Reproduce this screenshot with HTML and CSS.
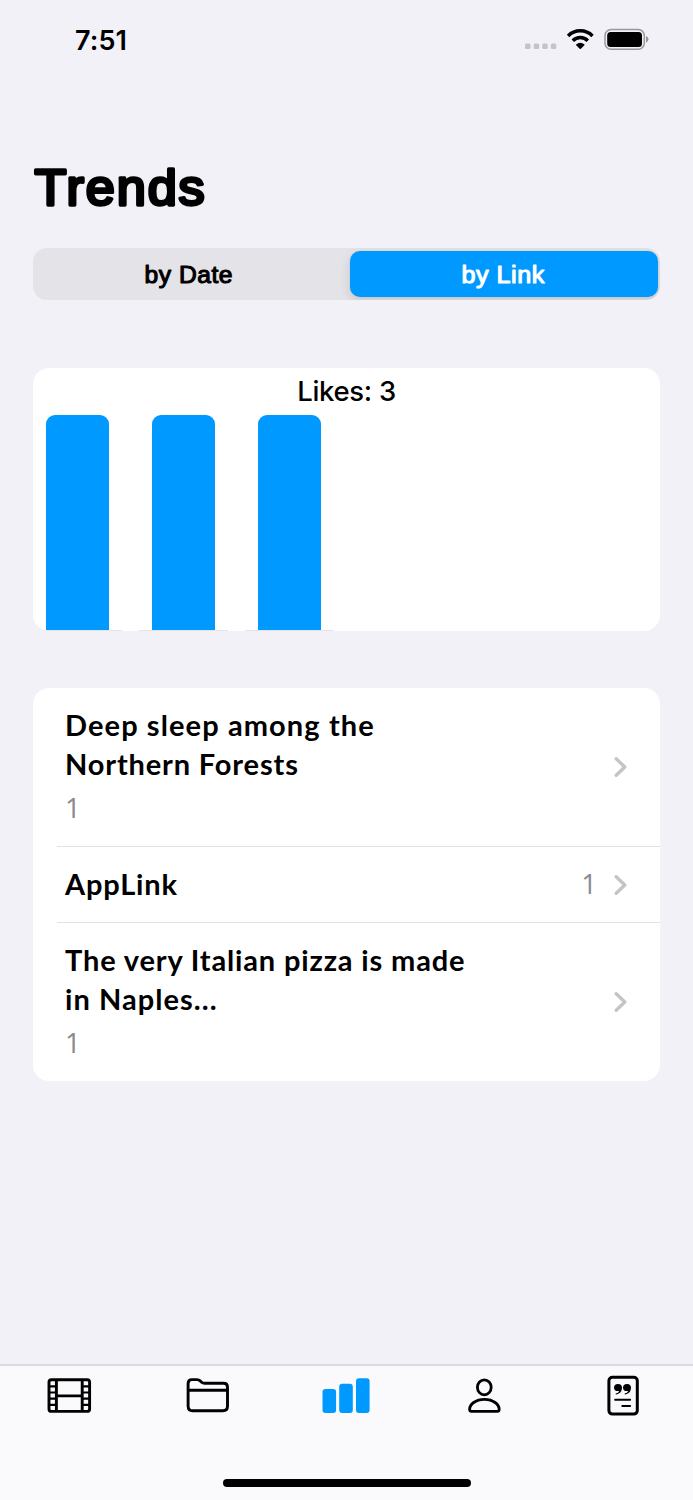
FILE: index.html
```html
<!DOCTYPE html>
<html lang="en">
<head>
<meta charset="utf-8">
<title>Trends</title>
<link rel="stylesheet" href="styles.css">
</head>
<body>
<div class="screen">
  <header class="status">
    <span class="time">7:51</span>
    <svg class="status-icons" width="126" height="28" viewBox="0 0 126 28">
      <g fill="#c4c3c8"><rect x="1" y="18.5" width="5.5" height="5.5" rx="1.5"/><rect x="9.7" y="18.5" width="5.5" height="5.5" rx="1.5"/><rect x="18.2" y="18.5" width="5.5" height="5.5" rx="1.5"/><rect x="26.8" y="18.5" width="5.5" height="5.5" rx="1.5"/></g>
      <g fill="none" stroke="#000" stroke-width="3.5"><path d="M44.1 10.9A17.3 17.3 0 0 1 68.5 10.9"/><path d="M48.8 15.7A10.6 10.6 0 0 1 63.8 15.7"/></g>
      <path d="M52.1 19.5Q56.3 16.1 60.5 19.5Q60.8 19.9 60.4 20.3L56.9 23.8Q56.3 24.4 55.7 23.8L52.2 20.3Q51.8 19.9 52.1 19.5Z"/>
      <rect x="81" y="4.5" width="39.3" height="19.7" rx="6" fill="none" stroke="#98979b" stroke-width="1.5"/>
      <rect x="83.2" y="6.9" width="34.8" height="15" rx="3.5"/>
      <path d="M122 10.9Q124.5 11.7 124.5 14.3T122 17.7Z" fill="#98979b"/>
    </svg>
  </header>
  <main class="content">
    <h1 class="title"><svg class="rounded heading" width="200" height="60"><text x="1.6" y="48" textLength="172" lengthAdjust="spacingAndGlyphs">Trends</text></svg></h1>
    <div class="segments">
      <div class="segment"><svg class="rounded label" width="90" height="32"><text x="0.5" y="25" textLength="88.5" lengthAdjust="spacingAndGlyphs">by Date</text></svg></div>
      <div class="segment selected"><svg class="rounded label" width="86" height="32"><text x="1.4" y="25" textLength="83.5" lengthAdjust="spacingAndGlyphs">by Link</text></svg></div>
    </div>
    <section class="chart">
      <div class="chart-title">Likes: 3</div>
      <div class="bars">
        <div class="slot"><div class="bar"></div></div>
        <div class="slot"><div class="bar"></div></div>
        <div class="slot"><div class="bar"></div></div>
      </div>
    </section>
    <section class="list">
      <div class="row tall first">
        <div class="text"><div class="name"><span class="l1">Deep sleep among the</span><br><span class="l2">Northern Forests</span></div><div class="count">1</div></div>
        <svg class="chevron" width="14" height="22" viewBox="0 0 14 22"><path d="M2.2 2.7L10.8 11L2.2 19.3"/></svg>
      </div>
      <div class="row short">
        <div class="text"><div class="name l3">AppLink</div></div>
        <div class="count side">1</div>
        <svg class="chevron" width="14" height="22" viewBox="0 0 14 22"><path d="M2.2 2.7L10.8 11L2.2 19.3"/></svg>
      </div>
      <div class="row tall">
        <div class="text"><div class="name"><span class="l4">The very Italian pizza is made</span><br><span class="l5">in Naples...</span></div><div class="count">1</div></div>
        <svg class="chevron" width="14" height="22" viewBox="0 0 14 22"><path d="M2.2 2.7L10.8 11L2.2 19.3"/></svg>
      </div>
    </section>
  </main>
  <footer class="tabbar">
    <nav class="tabs">
      <div class="tab"><svg width="50" height="50" viewBox="0 0 50 50"><g fill="none" stroke="#000" stroke-width="2.9"><rect x="5" y="9.8" width="40.6" height="31.6" rx="2.5"/><path d="M12.4 9.8V41.4M38.2 9.8V41.4M12.4 25.9H38.2" /><path stroke-width="2.2" d="M5 16.3H12M5 22.5H12M5 28.7H12M5 34.8H12M38 16.3H45M38 22.5H45M38 28.7H45M38 34.8H45"/></g></svg></div>
      <div class="tab"><svg width="50" height="50" viewBox="0 0 50 50"><path fill="none" stroke="#000" stroke-width="2.9" d="M5.1 36V13.5Q5.1 9.6 9 9.6H13.9Q15.8 9.6 17.2 10.9L18.6 12.2Q19.8 13.3 21.6 13.3H40.5Q44.5 13.3 44.5 17.3V36.3Q44.5 40.8 40 40.8H9.6Q5.1 40.8 5.1 36ZM5.1 20.2H44.5"/></svg></div>
      <div class="tab"><svg width="50" height="50" viewBox="0 0 50 50"><g fill="#0099ff"><rect x="1.5" y="19" width="13.6" height="24" rx="3"/><rect x="18.2" y="13.8" width="13.6" height="29.2" rx="3"/><rect x="35" y="8.2" width="13.6" height="34.8" rx="3"/></g></svg></div>
      <div class="tab"><svg width="50" height="50" viewBox="0 0 50 50"><g fill="none" stroke="#000" stroke-width="2.8"><ellipse cx="24.3" cy="17.3" rx="6.9" ry="7.5"/><path d="M9.6 39.3C9.6 34.5 15.5 29.3 24.4 29.3S39.2 34.5 39.2 39.3Q39.2 41.4 37.2 41.4H11.6Q9.6 41.4 9.6 39.3Z"/></g></svg></div>
      <div class="tab"><svg width="50" height="50" viewBox="0 0 50 50"><rect x="9.9" y="7.3" width="28.4" height="36.8" rx="3.5" fill="none" stroke="#000" stroke-width="3"/><path d="M15 17.7A4 3.7 0 1 1 23 17.8Q23 23.2 17.4 24.5Q16.2 24.6 16.7 23.6Q19.5 22.9 20.2 20.9Q15.4 22 15 17.7ZM24 17.7A4 3.7 0 1 1 32 17.8Q32 23.2 26.4 24.5Q25.2 24.6 25.7 23.6Q28.5 22.9 29.2 20.9Q24.4 22 24 17.7Z"/><path d="M16.1 29.7H31.1M23.3 36H31.1" stroke="#000" stroke-width="2" stroke-linecap="round"/></svg></div>
    </nav>
    <div class="home"></div>
  </footer>
</div>
</body>
</html>
```

FILE: styles.css
```css
* { box-sizing: border-box; }
body { margin: 0; background: #f2f1f7; color: #000; font-family: Inter, sans-serif; }
.screen { width: 693px; height: 1500px; display: flex; flex-direction: column; overflow: hidden; }
.status { height: 100px; padding: 25px 43px 0 75px; display: flex; justify-content: space-between; align-items: flex-start; }
.time { font-size: 27px; line-height: 31px; font-weight: 600; letter-spacing: 0.1px; }
.content { flex: 1; padding: 0 33px; }
.title { margin: 57px 0 0; height: 91px; }
.rounded { display: block; overflow: visible; font-family: "Liberation Sans", sans-serif; font-weight: 400; fill: currentColor; stroke: currentColor; stroke-linejoin: round; stroke-linecap: round; }
.heading { font-size: 50px; stroke-width: 3.3px; letter-spacing: 1.8px; }
.label { font-size: 23.5px; stroke-width: 1.1px; letter-spacing: 0.5px; }
.segments { height: 51.5px; padding: 3px 2.5px; border-radius: 14px; background: #e4e3e8; display: flex; overflow: hidden; }
.segment { flex: 1; padding-right: 7px; display: flex; align-items: center; justify-content: center; }
.selected { flex: 0 0 308px; padding: 0 2px 0 0; border-radius: 10px; background: #0099ff; color: #fff; box-shadow: 0 4px 11px rgba(0, 0, 0, 0.12), 0 0 2px rgba(0, 0, 0, 0.1); }
.chart { margin-top: 68.5px; height: 263px; border-radius: 16px; background: #fff; overflow: hidden; display: flex; flex-direction: column; }
.chart-title { height: 47px; padding-top: 6px; text-align: center; font-size: 27.5px; line-height: 34px; font-weight: 500; letter-spacing: -0.3px; }
.bars { flex: 1; display: flex; gap: 17px; }
.slot { width: 89px; padding: 0 12.6px 0 12.6px; border-bottom: 1.5px solid #e4e3e8; }
.bar { height: 215px; border-radius: 9px 9px 0 0; background: #0099ff; }
.list { margin-top: 57px; height: 393px; border-radius: 16px; background: #fff; }
.row { margin-left: 24px; padding: 0 32px 0 8px; display: flex; align-items: center; }
.row + .row { border-top: 1px solid #e2e2e4; }
.tall { height: 158px; padding-bottom: 1px; }
.first { padding-bottom: 2px; }
.short { height: 76px; padding-bottom: 1px; }
.text { flex: 1; }
.name { font: 700 29px/39px Lato, sans-serif; letter-spacing: 0.85px; }
.l1, .l2, .l4, .l5 { white-space: nowrap; }
.l1 { letter-spacing: 1.1px; }
.l3 { padding-bottom: 2px; }
.l5 { letter-spacing: 1.05px; }
.count { font: 400 27.5px/40px "Open Sans", sans-serif; color: #8a8a8e; padding-top: 5px; height: 44px; }
.side { padding: 0 17px 0 0; height: 40px; }
.chevron { fill: none; stroke: #c4c4c6; stroke-width: 3.3; stroke-linecap: round; stroke-linejoin: round; margin-top: 1px; }
.first .chevron { margin-top: 2px; }
.tabbar { height: 136px; border-top: 2px solid #dbdae0; background: #fafafc; display: flex; flex-direction: column; align-items: center; justify-content: space-between; padding-bottom: 13px; }
.tabs { width: 100%; display: flex; padding-top: 4px; }
.tab { flex: 1; display: flex; justify-content: center; }
.home { width: 248px; height: 8.5px; border-radius: 5px; background: #000; }
```
